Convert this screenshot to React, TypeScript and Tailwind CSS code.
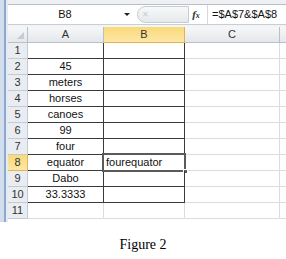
import React from "react";

const rows: { a: string; b: string }[] = [
  { a: "", b: "" },
  { a: "45", b: "" },
  { a: "meters", b: "" },
  { a: "horses", b: "" },
  { a: "canoes", b: "" },
  { a: "99", b: "" },
  { a: "four", b: "" },
  { a: "equator", b: "fourequator" },
  { a: "Dabo", b: "" },
  { a: "33.3333", b: "" },
  { a: "", b: "" },
];

export default function App() {
  return (
    <div
      className="w-[286px] h-[259px] bg-white overflow-hidden flex flex-col"
      style={{ fontFamily: '"Liberation Sans", Arial, sans-serif' }}
    >
      <div className="flex h-[222px]">
        {/* left blue strip */}
        <div className="w-[4px] bg-[#d3deed]" />
        <div className="w-[2px] bg-[#8ea8cf]" />
        <div className="w-[2px] bg-[#e4ebf5]" />
        <div className="flex-1 flex flex-col">
          {/* top band */}
          <div className="h-[4px] bg-[#eef0f3]" />
          <div className="h-[1px] bg-[#b9bfc7]" />
          {/* formula bar */}
          <div className="h-[19px] flex items-center text-[11px] text-[#111] bg-white">
            <div className="w-[114px] text-center">B8</div>
            <div className="w-0 h-0 border-l-[3px] border-r-[3px] border-t-[3px] border-l-transparent border-r-transparent border-t-[#222] ml-[2px]" />
            <div className="ml-[7px] w-[52px] h-[17px] rounded-l-[9px] border border-[#c5cbd3] bg-gradient-to-b from-[#f7f8f9] to-[#e6e9ec] flex items-center pl-[4px]">
              <span className="text-[8px] text-[#c9cdd2] leading-none">✕</span>
            </div>
            <div
              className="w-[14px] text-center italic text-[11px] text-[#333] font-bold"
              style={{ fontFamily: '"Liberation Serif", serif' }}
            >
              f<span className="text-[8px]">x</span>
            </div>
            <div className="w-[1px] h-[19px] bg-[#d5d9de] ml-[4px]" />
            <div className="pl-[4px]">=$A$7&amp;$A$8</div>
          </div>
          <div className="h-[1px] bg-[#c9ced5]" />
          <div className="h-[2px] bg-[#f3f4f6]" />
          {/* grid */}
          <div className="grid grid-cols-[20px_76px_81px_95px_1fr] text-[11px] text-[#111]">
            {/* header row */}
            <div className="h-[16px] relative bg-gradient-to-b from-[#f6f7f8] to-[#e4e7eb] border-r border-b border-[#b9c0c9]">
              <svg className="absolute right-[3px] bottom-[3px]" width="7" height="7" viewBox="0 0 7 7">
                <polygon points="7,0 7,7 0,7" fill="#c6cbd1" />
              </svg>
            </div>
            <div className="h-[16px] flex items-center justify-center text-[#333] bg-gradient-to-b from-[#f6f7f8] to-[#e4e7eb] border-r border-b border-[#b9c0c9]">
              A
            </div>
            <div className="h-[16px] flex items-center justify-center text-[#333] bg-gradient-to-b from-[#f9d978] to-[#fde7a6] border-r border-b border-[#e2b350]">
              B
            </div>
            <div className="h-[16px] flex items-center justify-center text-[#333] bg-gradient-to-b from-[#f6f7f8] to-[#e4e7eb] border-r border-b border-[#b9c0c9]">
              C
            </div>
            <div className="h-[16px] bg-gradient-to-b from-[#f6f7f8] to-[#e4e7eb] border-b border-[#b9c0c9]" />
            {rows.map((r, i) => {
              const n = i + 1;
              const sel = n === 8;
              const inTable = n <= 10;
              return (
                <React.Fragment key={n}>
                  <div
                    className={
                      sel
                        ? "h-[16px] flex items-center justify-center text-[#333] bg-gradient-to-b from-[#f9d978] to-[#fde7a6] border-r border-b border-[#e2b350]"
                        : "h-[16px] flex items-center justify-center text-[#333] bg-[#e9edf2] border-r border-b border-[#c3cad3]"
                    }
                  >
                    {n}
                  </div>
                  <div
                    className={
                      inTable
                        ? "h-[16px] flex items-center justify-center border-r border-b border-[#3a3a3a]"
                        : "h-[16px] flex items-center justify-center border-r border-b border-[#dadcdd]"
                    }
                  >
                    {r.a}
                  </div>
                  <div
                    className={
                      inTable
                        ? "h-[16px] relative flex items-center pl-[2px] border-r border-b border-[#3a3a3a]"
                        : "h-[16px] relative flex items-center pl-[2px] border-r border-b border-[#dadcdd]"
                    }
                  >
                    {sel && (
                      <div className="absolute left-[-2px] top-[-2px] right-[-2px] bottom-[-2px] border-2 border-[#5a5a5a]">
                        <div className="absolute right-[-4px] bottom-[-4px] w-[5px] h-[5px] bg-[#5a5a5a] border border-white" />
                      </div>
                    )}
                    {r.b}
                  </div>
                  <div className="h-[16px] border-r border-b border-[#dadcdd]" />
                  <div className="h-[16px] border-b border-[#dadcdd]" />
                </React.Fragment>
              );
            })}
          </div>
        </div>
      </div>
      <div
        className="flex-1 flex items-start justify-center pt-[15px] text-[14px] leading-[16px] text-black"
        style={{ fontFamily: '"Liberation Serif", "Times New Roman", serif' }}
      >
        Figure 2
      </div>
    </div>
  );
}
